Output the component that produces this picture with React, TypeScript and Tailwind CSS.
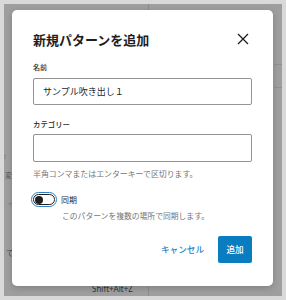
import React from "react";

export default function App() {
  const font = { fontFamily: '"Noto Sans CJK JP", "Noto Sans", sans-serif' };
  return (
    <div className="w-[286px] h-[300px] bg-[#d9d9d9] p-[4px]" style={font}>
      <div className="relative w-[278px] h-[292px] bg-[#9e9e9e] pt-[6px] pl-[8px] overflow-hidden">
        {/* faint underlying page */}
        <div className="absolute left-[144px] top-0 w-px h-[6px] bg-[#8c8c8c]" />
        <div className="absolute left-[144px] bottom-0 w-px h-[10px] bg-[#8c8c8c]" />
        <div className="absolute left-[270px] top-[60px] w-[8px] h-px bg-[#8f8f8f]" />
        <div className="absolute left-[270px] top-[83px] w-[8px] h-px bg-[#8f8f8f]" />
        <div className="absolute left-[0px] top-[150px] text-[6px] leading-none text-[#666]">!</div>
        <div className="absolute left-[1px] top-[168px] text-[7px] leading-none text-[#555]">変</div>
        <div className="absolute left-[3px] top-[196px] text-[7px] leading-none text-[#6a7f95]">イ</div>
        <div className="absolute left-[2px] top-[245px] text-[8px] leading-none text-[#444]">て</div>
        <div className="absolute left-[88px] top-[281px] text-[8px] leading-none text-[#333]" style={{ fontFamily: '"Noto Sans", sans-serif' }}>Shift+Alt+Z</div>

        {/* modal */}
        <div className="relative w-[261px] h-[276px] bg-white rounded-[5px] shadow-[0_2px_6px_rgba(0,0,0,0.18)] px-[21px] flex flex-col">
          <div className="flex items-center justify-between h-[24px] mt-[17px]">
            <span className="text-[13px] font-semibold text-[#1e1e1e] leading-none">新規パターンを追加</span>
            <svg width="12" height="12" viewBox="0 0 12 12" className="mr-[3px]">
              <path d="M1 1 L11 11 M11 1 L1 11" stroke="#1e1e1e" strokeWidth="1.3" fill="none" />
            </svg>
          </div>
          <div className="mt-[13px] text-[7px] leading-none text-[#1e1e1e] font-medium">名前</div>
          <div className="mt-[7px] h-[27px] border border-[#949494] rounded-[2px] flex items-center px-[9px]">
            <span className="text-[9px] leading-none text-[#1e1e1e]">サンプル吹き出し１</span>
          </div>
          <div className="mt-[15px] text-[7.4px] leading-none text-[#1e1e1e] font-medium">カテゴリー</div>
          <div className="mt-[7px] h-[28px] border border-[#949494] rounded-[2px]" />
          <div className="mt-[8px] text-[7.9px] leading-none text-[#757575]">半角コンマまたはエンターキーで区切ります。</div>
          <div className="mt-[14px] flex items-center">
            <div className="w-[26px] h-[15px] rounded-full border-[1.5px] border-[#2f7fc1] p-[1px] ml-[-2px]">
              <div className="h-full rounded-full border border-[#1e1e1e] bg-white flex items-center px-[1px]">
                <div className="w-[8px] h-[8px] rounded-full bg-[#1e1e1e]" />
              </div>
            </div>
            <span className="ml-[4px] text-[8px] leading-none text-[#1e1e1e]">同期</span>
          </div>
          <div className="mt-[5px] ml-[29px] text-[7.8px] leading-none text-[#757575]">このパターンを複数の場所で同期します。</div>
          <div className="mt-[16px] flex items-center justify-end">
            <span className="text-[8.6px] leading-none font-medium text-[#2a7fc0] mr-[14px]">キャンセル</span>
            <div className="w-[34px] h-[27px] bg-[#0a7cc0] rounded-[2px] flex items-center justify-center">
              <span className="text-[8.6px] leading-none font-medium text-white">追加</span>
            </div>
          </div>
        </div>
      </div>
    </div>
  );
}
